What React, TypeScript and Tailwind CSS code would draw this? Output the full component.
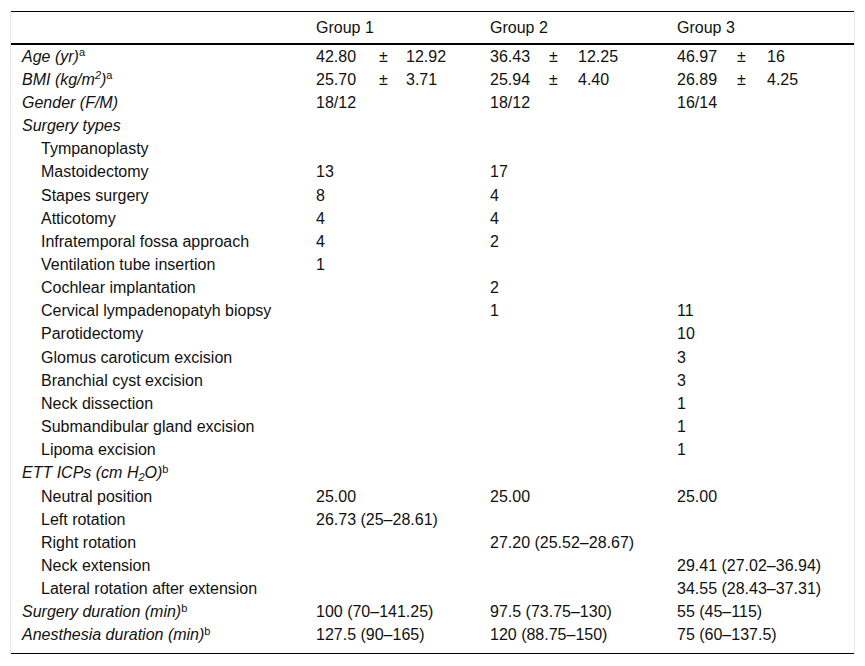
type Cell = React.ReactNode;

const rowData: { label: Cell; indent?: boolean; italic?: boolean; g1?: Cell; g2?: Cell; g3?: Cell }[] = [];

const Sup = ({ children }: { children: React.ReactNode }) => (
  <sup className="not-italic text-[11px]">{children}</sup>
);

const MeanSd = ({ m, sd, w1, w2 }: { m: string; sd: string; w1: number; w2: number }) => (
  <span className="flex">
    <span style={{ width: w1 }}>{m}</span>
    <span style={{ width: w2 }}>±</span>
    <span>{sd}</span>
  </span>
);

rowData.push(
  {
    label: (
      <>
        Age (yr)<Sup>a</Sup>
      </>
    ),
    italic: true,
    g1: <MeanSd m="42.80" sd="12.92" w1={63} w2={27} />,
    g2: <MeanSd m="36.43" sd="12.25" w1={59} w2={29} />,
    g3: <MeanSd m="46.97" sd="16" w1={60} w2={30} />,
  },
  {
    label: (
      <>
        BMI (kg/m<sup className="text-[11px]">2</sup>)<Sup>a</Sup>
      </>
    ),
    italic: true,
    g1: <MeanSd m="25.70" sd="3.71" w1={63} w2={27} />,
    g2: <MeanSd m="25.94" sd="4.40" w1={59} w2={29} />,
    g3: <MeanSd m="26.89" sd="4.25" w1={60} w2={30} />,
  },
  { label: "Gender (F/M)", italic: true, g1: "18/12", g2: "18/12", g3: "16/14" },
  { label: "Surgery types", italic: true },
  { label: "Tympanoplasty", indent: true },
  { label: "Mastoidectomy", indent: true, g1: "13", g2: "17" },
  { label: "Stapes surgery", indent: true, g1: "8", g2: "4" },
  { label: "Atticotomy", indent: true, g1: "4", g2: "4" },
  { label: "Infratemporal fossa approach", indent: true, g1: "4", g2: "2" },
  { label: "Ventilation tube insertion", indent: true, g1: "1" },
  { label: "Cochlear implantation", indent: true, g2: "2" },
  { label: "Cervical lympadenopatyh biopsy", indent: true, g2: "1", g3: "11" },
  { label: "Parotidectomy", indent: true, g3: "10" },
  { label: "Glomus caroticum excision", indent: true, g3: "3" },
  { label: "Branchial cyst excision", indent: true, g3: "3" },
  { label: "Neck dissection", indent: true, g3: "1" },
  { label: "Submandibular gland excision", indent: true, g3: "1" },
  { label: "Lipoma excision", indent: true, g3: "1" },
  {
    label: (
      <>
        ETT ICPs (cm H<sub className="text-[11px]">2</sub>O)<Sup>b</Sup>
      </>
    ),
    italic: true,
  },
  { label: "Neutral position", indent: true, g1: "25.00", g2: "25.00", g3: "25.00" },
  { label: "Left rotation", indent: true, g1: "26.73 (25–28.61)" },
  { label: "Right rotation", indent: true, g2: "27.20 (25.52–28.67)" },
  { label: "Neck extension", indent: true, g3: "29.41 (27.02–36.94)" },
  { label: "Lateral rotation after extension", indent: true, g3: "34.55 (28.43–37.31)" },
  {
    label: (
      <>
        Surgery duration (min)<Sup>b</Sup>
      </>
    ),
    italic: true,
    g1: "100 (70–141.25)",
    g2: "97.5 (73.75–130)",
    g3: "55 (45–115)",
  },
  {
    label: (
      <>
        Anesthesia duration (min)<Sup>b</Sup>
      </>
    ),
    italic: true,
    g1: "127.5 (90–165)",
    g2: "120 (88.75–150)",
    g3: "75 (60–137.5)",
  }
);

const cols = "grid grid-cols-[294px_174px_187px_1fr] pl-[11px]";

export default function App() {
  return (
    <div className="min-h-[666px] bg-white pt-[11px] font-['Liberation_Sans',Arial,sans-serif] text-[16px] text-[#111]">
      <div className="ml-[10px] w-[845px]">
        <div className="border-x border-[#e8e8e8]">
          <div className="border-t border-black">
            {/* header */}
            <div className={`${cols} h-[33px] items-center border-b-2 border-black leading-none`}>
              <div />
              <div>Group 1</div>
              <div>Group 2</div>
              <div>Group 3</div>
            </div>

            {/* body */}
            <div className="pb-[6px]">
              {rowData.map((r, i) => (
                <div key={i} className={`${cols} h-[23.16px] items-center leading-none`}>
                  <div className={`${r.italic ? "italic" : ""} ${r.indent ? "pl-[19px]" : ""} whitespace-nowrap`}>
                    {r.label}
                  </div>
                  <div className="whitespace-nowrap">{r.g1}</div>
                  <div className="whitespace-nowrap">{r.g2}</div>
                  <div className="whitespace-nowrap">{r.g3}</div>
                </div>
              ))}
            </div>
          </div>
        </div>
        <div className="mx-px border-t border-black" />
      </div>
    </div>
  );
}
